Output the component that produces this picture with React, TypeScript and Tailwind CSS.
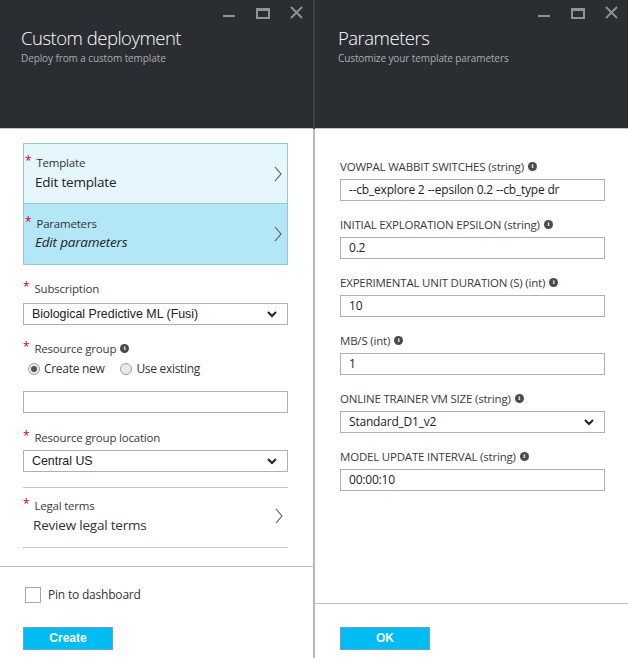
import React from 'react';

const segoe = { fontFamily: '"Open Sans", "Noto Sans", sans-serif' };

const WindowIcons = () => (
  <div className="flex items-start gap-[20px] text-[#8f9297]">
    <svg width="13" height="20" viewBox="0 0 13 20">
      <rect x="0" y="15" width="12" height="2" fill="currentColor" />
    </svg>
    <svg width="14" height="20" viewBox="0 0 14 20">
      <rect x="1" y="9" width="12" height="9" fill="none" stroke="currentColor" strokeWidth="2" />
      <rect x="1" y="8" width="12" height="3" fill="currentColor" />
    </svg>
    <svg width="13" height="20" viewBox="0 0 13 20">
      <path d="M1 7 L12 18 M12 7 L1 18" stroke="currentColor" strokeWidth="1.8" />
    </svg>
  </div>
);

const Header = ({ title, subtitle, pl }: { title: string; subtitle: string; pl: string }) => (
  <div className={`h-[129px] bg-[#2a2d32] border-b border-[#c4c4c4] relative ${pl}`}>
    <div className="absolute right-[10px] top-0">
      <WindowIcons />
    </div>
    <div className="pt-[25px] text-white text-[18.5px] font-light leading-[26px] tracking-[-0.5px]" style={segoe}>
      {title}
    </div>
    <div className="text-[#a9acb1] text-[10px] leading-[14px] tracking-[-0.1px]" style={segoe}>
      {subtitle}
    </div>
  </div>
);

const Star = () => <span className="text-[#d0021b] text-[12px] leading-none mr-[5px] relative top-[-2px]">*</span>;

const Info = () => (
  <span className="inline-flex items-center justify-center w-[9px] h-[9px] rounded-full bg-[#4a4a4a] text-white text-[7px] font-bold leading-none ml-[4px] relative top-[-1px]" style={{ fontFamily: '"Liberation Serif", serif' }}>
    i
  </span>
);

const Chevron = () => (
  <svg width="8" height="16" viewBox="0 0 8 16" className="text-[#555]">
    <path d="M1 1 L7 8 L1 15" fill="none" stroke="currentColor" strokeWidth="1.1" />
  </svg>
);

const DownArrow = () => (
  <svg width="10" height="7" viewBox="0 0 10 7">
    <path d="M1 1 L5 5 L9 1" fill="none" stroke="#222" strokeWidth="2" />
  </svg>
);

const Select = ({ value, arial }: { value: string; arial?: boolean }) => (
  <div className="h-[22px] border border-[#b0b0b0] bg-white flex items-center pl-[8px] pr-[10px]">
    <span
      className={`flex-1 text-[#222] leading-none ${arial ? 'text-[12.4px]' : 'text-[12px] tracking-[-0.2px]'}`}
      style={arial ? { fontFamily: '"Liberation Sans", Arial, sans-serif' } : segoe}
    >
      {value}
    </span>
    <DownArrow />
  </div>
);

const TextBox = ({ value }: { value: string }) => (
  <div className="h-[22px] border border-[#b0b0b0] bg-white flex items-center pl-[8px]">
    <span className="text-[12px] text-[#222] leading-none tracking-[-0.2px]" style={segoe}>
      {value}
    </span>
  </div>
);

const Label = ({ children, star }: { children: React.ReactNode; star?: boolean }) => (
  <div className="h-[18px] flex items-center text-[11.5px] text-[#3b3b3b] tracking-[-0.2px]" style={segoe}>
    {star && <Star />}
    {children}
  </div>
);

const Radio = ({ checked, label }: { checked?: boolean; label: string }) => (
  <div className="flex items-center gap-[4px]">
    <span className="w-[12px] h-[12px] rounded-full border border-[#a0a0a0] bg-[#e9e9e9] flex items-center justify-center">
      {checked && <span className="w-[6px] h-[6px] rounded-full bg-[#555]" />}
    </span>
    <span className="text-[12px] text-[#333] tracking-[-0.3px]" style={segoe}>{label}</span>
  </div>
);

const Blade = ({ label, value, bg, italic }: { label: string; value: string; bg: string; italic?: boolean }) => (
  <div className={`h-[60px] flex items-center pl-[1px] pr-[5px] ${bg}`}>
    <div className="flex-1 pt-[1px]">
      <div className="flex items-center h-[16px] text-[11.5px] text-[#333] tracking-[-0.2px]" style={segoe}>
        <Star />
        {label}
      </div>
      <div className={`pl-[10px] h-[22px] flex items-center text-[13.5px] text-[#222] tracking-[-0.2px] ${italic ? 'italic' : ''}`} style={segoe}>
        {value}
      </div>
    </div>
    <Chevron />
  </div>
);

const Button = ({ text }: { text: string }) => (
  <button
    className="w-[90px] h-[23px] bg-[#00bcf2] border border-[#63a9c7] text-white text-[12px] font-bold"
    style={{ fontFamily: '"Liberation Sans", Arial, sans-serif' }}
  >
    {text}
  </button>
);

const params = [
  { label: 'VOWPAL WABBIT SWITCHES (string)', value: '--cb_explore 2 --epsilon 0.2 --cb_type dr' },
  { label: 'INITIAL EXPLORATION EPSILON (string)', value: '0.2' },
  { label: 'EXPERIMENTAL UNIT DURATION (S) (int)', value: '10' },
  { label: 'MB/S (int)', value: '1' },
  { label: 'ONLINE TRAINER VM SIZE (string)', value: 'Standard_D1_v2', select: true },
  { label: 'MODEL UPDATE INTERVAL (string)', value: '00:00:10' },
];

export default function App() {
  return (
    <div className="w-[628px] h-[658px] flex bg-white overflow-hidden">
      {/* Custom deployment blade */}
      <div className="w-[313px] h-full flex flex-col">
        <Header title="Custom deployment" subtitle="Deploy from a custom template" pl="pl-[21px]" />
        <div className="flex-1 flex flex-col pl-[23px] pr-[25px] pt-[14px]">
          <div className="border border-[#9cc4d8]">
            <Blade label="Template" value="Edit template" bg="bg-[#e5f6fd] border-b border-[#9cc4d8]" />
            <Blade label="Parameters" value="Edit parameters" bg="bg-[#b3e7f7]" italic />
          </div>

          <div className="mt-[15px]">
            <Label star>Subscription</Label>
          </div>
          <div className="mt-[5px]">
            <Select value="Biological Predictive ML (Fusi)" arial />
          </div>

          <div className="mt-[15px]">
            <Label star>
              Resource group <Info />
            </Label>
          </div>
          <div className="mt-[2px] h-[18px] flex items-center gap-[16px] pl-[5px]">
            <Radio checked label="Create new" />
            <Radio label="Use existing" />
          </div>
          <div className="mt-[13px] h-[22px] border border-[#b0b0b0]" />

          <div className="mt-[16px]">
            <Label star>Resource group location</Label>
          </div>
          <div className="mt-[3px]">
            <Select value="Central US" arial />
          </div>

          <div className="mt-[15px] border-t border-[#c8c8c8]" />
          <div className="flex items-center pr-[5px] mt-[9px]">
            <div className="flex-1">
              <Label star>Legal terms</Label>
              <div className="pl-[10px] h-[20px] flex items-center text-[13.5px] text-[#333] tracking-[-0.2px]" style={segoe}>
                Review legal terms
              </div>
            </div>
            <Chevron />
          </div>
          <div className="mt-[12px] border-t border-[#c8c8c8]" />
        </div>
        <div className="h-[92px] border-t border-[#c0c0c0] pl-[23px] pt-[19px]">
          <div className="flex items-center h-[17px] pl-[2px] gap-[7px]">
            <span className="w-[16px] h-[16px] border border-[#a6a6a6] bg-white" />
            <span className="text-[12px] text-[#333] tracking-[-0.2px]" style={segoe}>Pin to dashboard</span>
          </div>
          <div className="mt-[21px]">
            <Button text="Create" />
          </div>
        </div>
      </div>

      {/* divider */}
      <div className="w-[2px] h-full flex flex-col">
        <div className="h-[129px] bg-[#3d4045]" />
        <div className="flex-1 bg-[#b8b8b8]" />
      </div>

      {/* Parameters blade */}
      <div className="flex-1 h-full flex flex-col">
        <Header title="Parameters" subtitle="Customize your template parameters" pl="pl-[23px]" />
        <div className="flex-1 pl-[25px] pr-[23px] pt-[29px] flex flex-col gap-[15px]">
          {params.map((p) => (
            <div key={p.label}>
              <Label>
                {p.label} <Info />
              </Label>
              <div className="mt-[3px]">
                {p.select ? <Select value={p.value} /> : <TextBox value={p.value} />}
              </div>
            </div>
          ))}
        </div>
        <div className="h-[55px] border-t border-[#c0c0c0] pl-[25px] pt-[20px]">
          <Button text="OK" />
        </div>
      </div>
    </div>
  );
}
